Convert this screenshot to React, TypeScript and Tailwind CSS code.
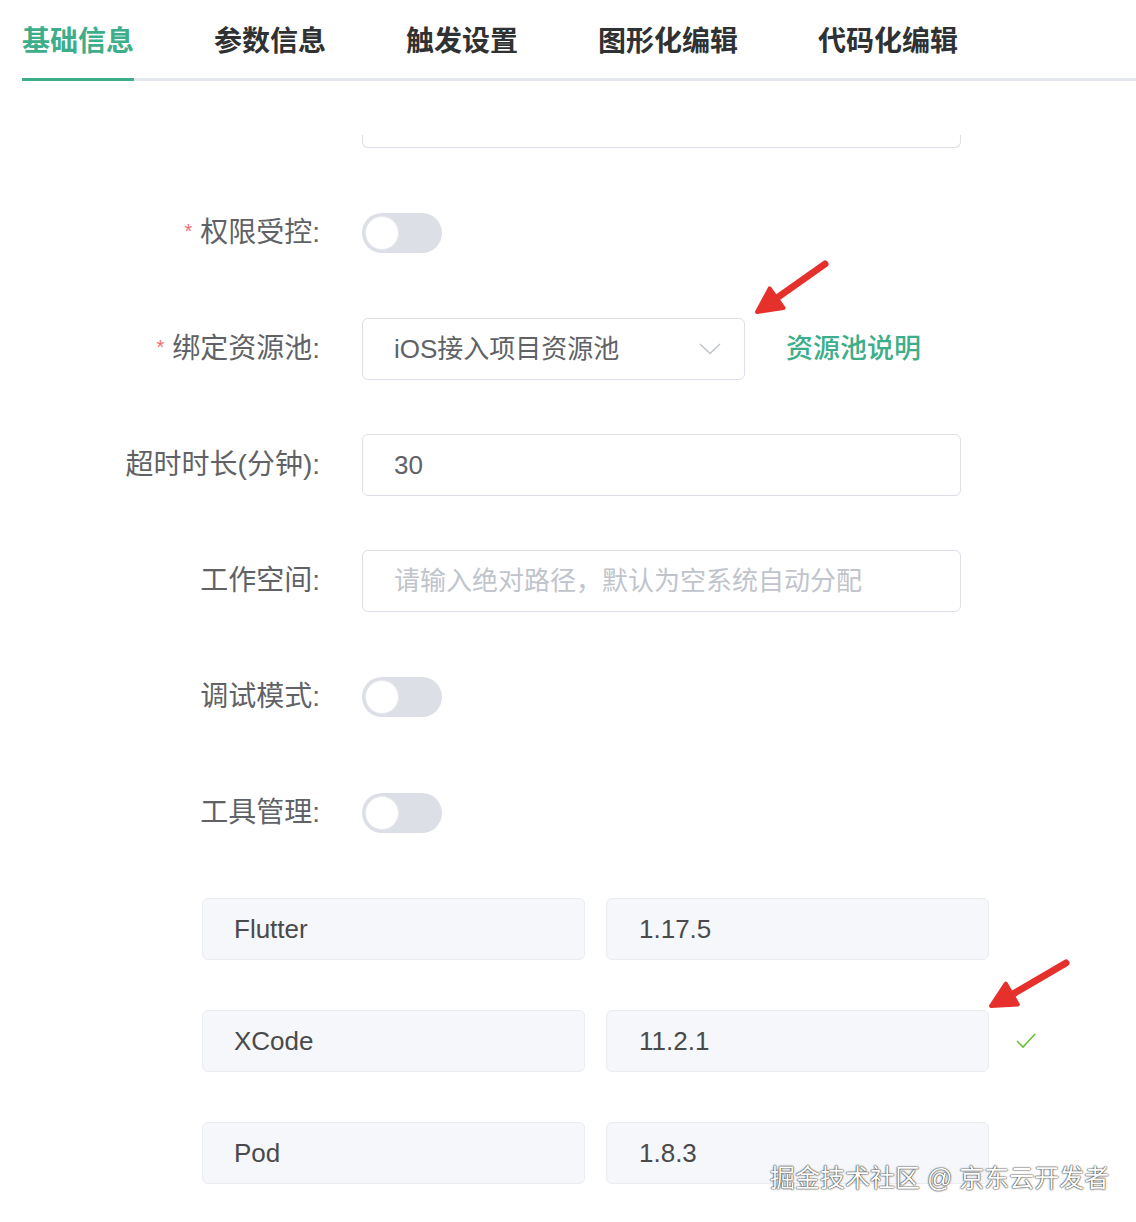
import React from 'react'

const tabs = ['基础信息', '参数信息', '触发设置', '图形化编辑', '代码化编辑']

function Toggle() {
  return (
    <div className="w-[80px] h-[40px] rounded-full bg-[#dcdfe6] flex items-center">
      <div className="ml-[3px] w-[34px] h-[34px] rounded-full bg-white border border-[#e8eaee]" />
    </div>
  )
}

function Row(props: { label: string; required?: boolean; children: React.ReactNode }) {
  return (
    <div className="flex items-center h-[62px]">
      <div className="w-[320px] flex items-center justify-end text-[28px] text-[#606266] whitespace-nowrap">
        {props.required && <span className="text-[#f56c6c] text-[20px] mr-[8px] -mt-[4px]">*</span>}
        {props.label}
      </div>
      <div className="ml-[42px] flex items-center">{props.children}</div>
    </div>
  )
}

function ToolRow(props: { name: string; version: string; ok?: boolean }) {
  return (
    <div className="ml-[202px] flex items-center gap-[21px] h-[62px]">
      <div className="w-[383px] h-[62px] rounded-[6px] border border-[#e9ecf0] bg-[#f5f7fa] flex items-center pl-[31px] text-[26px] text-[#4a4a4a]">
        {props.name}
      </div>
      <div className="w-[383px] h-[62px] rounded-[6px] border border-[#e9ecf0] bg-[#f5f7fa] flex items-center pl-[32px] text-[26px] text-[#4a4a4a]">
        {props.version}
      </div>
      {props.ok && (
        <svg width="20" height="16" viewBox="0 0 20 16" className="ml-[6px]">
          <polyline points="1,8 7,14 19,1" fill="none" stroke="#67c23a" strokeWidth="1.6" />
        </svg>
      )}
    </div>
  )
}

export default function App() {
  return (
    <div className="relative w-[1136px] h-[1222px] overflow-hidden bg-white font-['Liberation_Sans','Noto_Sans_CJK_SC',sans-serif]">
      {/* tabs */}
      <div className="ml-[22px] flex gap-[80px] border-b-[3px] border-[#e4e7ed]">
        {tabs.map((t, i) => (
          <div
            key={t}
            className={`h-[81px] -mb-[3px] border-b-[3px] pt-[5px] flex items-center text-[28px] font-semibold leading-none ${i === 0 ? 'border-[#3eae8a] text-[#3eae8a]' : 'border-transparent text-[#303133]'}`}
          >
            {t}
          </div>
        ))}
      </div>

      {/* input scrolled out of view */}
      <div className="ml-[362px] mt-[54px] w-[599px] h-[13px] border border-t-0 border-[#dcdfe6] rounded-b-[6px]" />

      <div className="mt-[54px] flex flex-col gap-[54px]">
        <Row label="权限受控:" required>
          <Toggle />
        </Row>
        <Row label="绑定资源池:" required>
          <div className="w-[383px] h-[62px] rounded-[6px] border border-[#dcdfe6] flex items-center justify-between pl-[31px] pr-[23px] text-[26px] text-[#606266]">
            <span>iOS接入项目资源池</span>
            <svg width="22" height="12" viewBox="0 0 22 12">
              <polyline points="1,1 11,10.5 21,1" fill="none" stroke="#c0c4cc" strokeWidth="1.5" />
            </svg>
          </div>
          <span className="ml-[41px] text-[27px] font-medium text-[#3eae8a]">资源池说明</span>
        </Row>
        <Row label="超时时长(分钟):">
          <div className="w-[599px] h-[62px] rounded-[6px] border border-[#dcdfe6] flex items-center pl-[31px] text-[26px] text-[#606266]">
            30
          </div>
        </Row>
        <Row label="工作空间:">
          <div className="w-[599px] h-[62px] rounded-[6px] border border-[#dcdfe6] flex items-center pl-[31px] text-[26px] text-[#c0c4cc]">
            请输入绝对路径，默认为空系统自动分配
          </div>
        </Row>
        <Row label="调试模式:">
          <Toggle />
        </Row>
        <Row label="工具管理:">
          <Toggle />
        </Row>
      </div>

      <div className="mt-[54px] flex flex-col gap-[50px]">
        <ToolRow name="Flutter" version="1.17.5" />
        <ToolRow name="XCode" version="11.2.1" ok />
        <ToolRow name="Pod" version="1.8.3" />
      </div>

      {/* annotation arrows */}
      <svg className="absolute left-0 top-0 pointer-events-none" width="1136" height="1222">
        <g fill="#e5302b" stroke="#e5302b" strokeLinecap="round" strokeLinejoin="round">
          <line x1="825" y1="264" x2="774" y2="300" strokeWidth="7" />
          <polygon points="757,312 769.7,288.4 783.5,308" strokeWidth="4" />
          <line x1="1066" y1="963" x2="1008" y2="997" strokeWidth="7" />
          <polygon points="991,1006 1005.8,983.6 1017.8,1004.4" strokeWidth="4" />
        </g>
      </svg>

      {/* watermark */}
      <div className="absolute left-[770px] top-[1161px] text-[25px] leading-[34px] text-white whitespace-nowrap [text-shadow:0_0_2px_rgba(0,0,0,0.85),0_0_1px_rgba(0,0,0,0.9)]">
        掘金技术社区 @ 京东云开发者
      </div>
    </div>
  )
}
